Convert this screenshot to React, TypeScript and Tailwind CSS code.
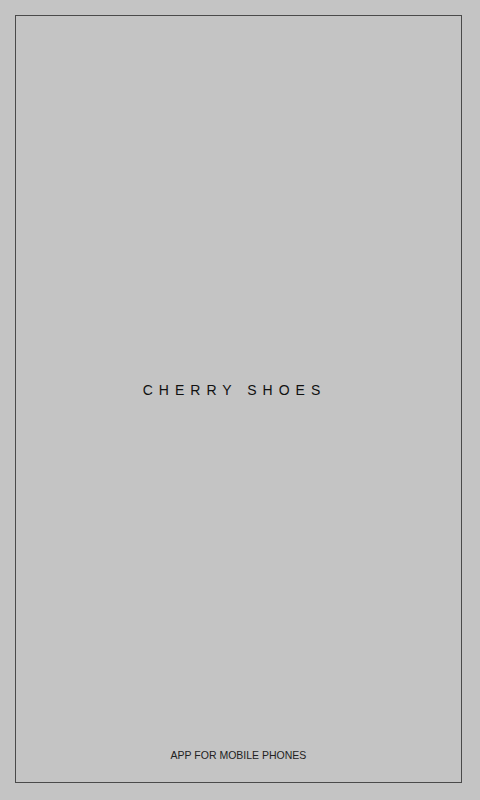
export default function App() {
  return (
    <div className="h-[800px] w-[480px] bg-[#c4c4c4] pt-[15px] pl-[15px] font-['Liberation_Sans',Arial,sans-serif]">
      <div className="flex h-[768px] w-[447px] flex-col border border-[#4a4a4a]">
        {/* Title */}
        <div className="flex flex-1 items-center justify-center pt-[16px] pr-[8px]">
          <h1 className="text-[14px] tracking-[6px] text-[#111]">CHERRY SHOES</h1>
        </div>
        {/* Footer */}
        <p className="pb-[20px] text-center text-[10.5px] leading-[13px] text-[#222]">APP FOR MOBILE PHONES</p>
      </div>
    </div>
  );
}
